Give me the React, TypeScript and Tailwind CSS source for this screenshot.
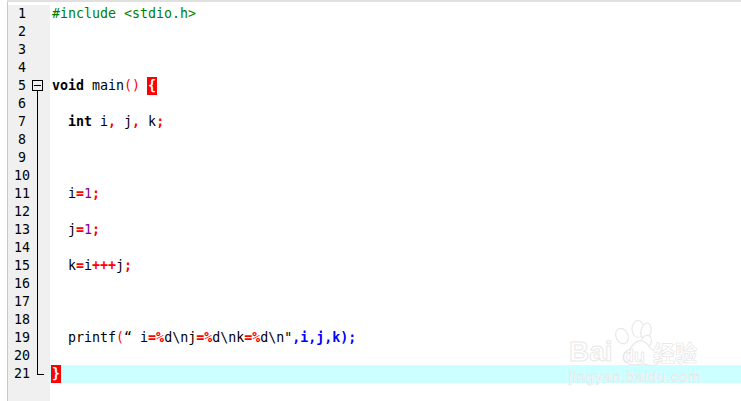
import React from 'react';

const RED = 'text-[#ff0000] font-bold';
const BLUE = 'text-[#0000ff] font-bold';
const PURPLE = 'text-[#8000a0]';
const BRACE = 'relative inline-block h-[18px] w-[10px] -mx-px bg-[#ff0000] text-center align-top font-bold text-white';

type Tok = [string, string?];

const code: Record<number, Tok[]> = {
  1: [['#include <stdio.h>', 'text-[#008000]']],
  5: [['void', 'font-bold'], [' main'], ['()', 'text-[#ff0000]'], [' '], ['{', BRACE]],
  7: [['  '], ['int', 'font-bold'], [' i'], [',', RED], [' j'], [',', RED], [' k'], [';', RED]],
  11: [['  i'], ['=', RED], ['1', PURPLE], [';', RED]],
  13: [['  j'], ['=', RED], ['1', PURPLE], [';', RED]],
  15: [['  k'], ['=', RED], ['i'], ['+++', RED], ['j'], [';', RED]],
  19: [
    ['  printf'], ['(', 'text-[#ff0000]'], ['“ i'], ['=', RED], ['%', RED], ['d\\nj'], ['=', RED], ['%', RED],
    ['d\\nk'], ['=', RED], ['%', RED], ['d\\n"'], [',i,j,k', BLUE], [')', BLUE], [';', BLUE],
  ],
  21: [['}', BRACE]],
};

const lines = Array.from({ length: 21 }, (_, i) => i + 1);

function Fold({ n }: { n: number }) {
  if (n === 5) {
    return (
      <div className="relative h-full w-full">
        <div className="absolute left-[32px] top-[3px] h-[11px] w-[11px] border border-black bg-[#f0f0f0]">
          <div className="mx-auto mt-[4px] h-px w-[7px] bg-black" />
        </div>
        <div className="absolute left-[37px] top-[14px] h-[4px] w-px bg-black" />
      </div>
    );
  }
  if (n > 5 && n < 21) {
    return <div className="ml-[37px] h-full w-px bg-black" />;
  }
  if (n === 21) {
    return <div className="ml-[37px] h-[10px] w-[7px] border-b border-l border-black" />;
  }
  return null;
}

function Watermark() {
  return (
    <div className="pointer-events-none absolute left-[567px] top-[320px] h-[68px] w-[165px] text-white">
      <svg className="absolute left-[46px] top-0" width="60" height="50" viewBox="0 0 60 50" fill="#ffffff" stroke="#e8e8e8" strokeWidth="1.2">
        <ellipse cx="9" cy="16" rx="6" ry="8" transform="rotate(-25 9 16)" />
        <ellipse cx="25" cy="9" rx="6" ry="8.5" />
        <ellipse cx="33" cy="11" rx="5" ry="8" transform="rotate(15 33 11)" />
        <ellipse cx="33" cy="22" rx="5" ry="7" transform="rotate(25 33 22)" />
        <path d="M14 43c-6-3-5-11 3-14 3-5 6-9 11-8 5 0 7 4 10 8 9 3 12 13 4 16-6 2-10-2-14-1-5 1-9 2-14-1z" />
      </svg>
      <span className="absolute left-[56px] top-[27px] font-['Liberation_Sans',sans-serif] text-[18px] font-bold leading-none text-transparent [-webkit-text-stroke:0.6px_#e0e0e0]">du</span>
      <span className="absolute left-[2px] top-[18px] font-['Liberation_Sans',sans-serif] text-[28px] font-bold leading-none text-white [-webkit-text-stroke:1px_#e8e8e8]">Bai</span>
      <span className="absolute left-[86px] top-[20px] font-['Noto_Sans_CJK_SC',sans-serif] text-[22px] font-bold leading-none text-white [-webkit-text-stroke:0.6px_#e4e4e4]">经验</span>
      <span className="absolute left-[2px] top-[49px] font-['Liberation_Sans',sans-serif] text-[15px] leading-none tracking-[0.7px] text-white [-webkit-text-stroke:0.5px_#e2e2e2]">jingyan.baidu.com</span>
    </div>
  );
}

export default function App() {
  return (
    <div className="relative h-[401px] w-[741px] overflow-hidden bg-white font-['DejaVu_Sans_Mono',monospace] text-[13.3px] leading-[18px] text-black">
      <div className="ml-[7px] h-[2px] bg-[#e0e0e0]" />
      <div className="flex h-[399px] pl-[7px]">
        <div className="w-px bg-[#c8c8c8]" />
        <div className="flex min-w-0 flex-1 flex-col">
          <div className="flex h-[3px]">
            <div className="w-[42px] bg-white" />
          </div>
          {lines.map((n) => (
            <div key={n} className={`flex h-[18px] ${n === 21 ? 'bg-[#ccffff]' : ''}`}>
              <div className="flex w-[42px] shrink-0 bg-[#f0f0f0]">
                <div className="ml-[2px] w-[24px] shrink-0 text-center">{n}</div>
              </div>
              <div className="absolute left-0 h-[18px] w-[50px]">
                <Fold n={n} />
              </div>
              <pre className="ml-[2px] font-['DejaVu_Sans_Mono',monospace] text-[13.3px] leading-[18px]">
                {(code[n] ?? []).map((t, i) => (
                  <span key={i} className={t[1]}>{t[0]}</span>
                ))}
              </pre>
              {n === 21 && <div className="-ml-[2px] h-[18px] w-[2px] bg-[#00c8c8]" />}
            </div>
          ))}
          <div className="w-[42px] flex-1 bg-[#f0f0f0]" />
        </div>
      </div>
      <Watermark />
    </div>
  );
}
